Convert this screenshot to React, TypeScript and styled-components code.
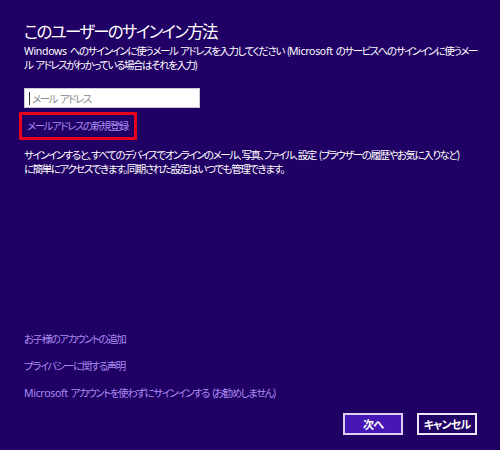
import React from "react";
import styled, { createGlobalStyle } from "styled-components";

const Global = createGlobalStyle`
  html, body { margin: 0; padding: 0; background: #200064; }
  body { font-family: "Noto Sans CJK JP", "Noto Sans", sans-serif; }
`;

const Page = styled.div`
  width: 500px;
  height: 450px;
  box-sizing: border-box;
  background: #200064;
  color: #ffffff;
  padding: 19px 23px 0 24px;
  display: flex;
  flex-direction: column;
  font-family: "Noto Sans CJK JP", "Noto Sans", sans-serif;
  font-feature-settings: "palt";
`;

const Title = styled.h1`
  margin: 0;
  font-weight: 400;
  font-size: 16.5px;
  line-height: 24px;
  letter-spacing: -1.75px;
  color: #ffffff;
`;

const textStyle = `
  font-size: 10.5px;
  letter-spacing: -1.45px;
  word-spacing: 2px;
  white-space: nowrap;
`;

const Lat = styled.span`
  font-family: "Noto Sans", sans-serif;
  font-size: 10.5px;
  letter-spacing: -0.3px;
  word-spacing: 0;
`;

const Desc = styled.p`
  margin: 1px 0 0 0;
  line-height: 14px;
  color: #ffffff;
  ${textStyle}
`;

const Input = styled.div`
  margin-top: 16px;
  width: 170px;
  height: 18px;
  background: #ffffff;
  border: 1px solid #c8c8d8;
  box-sizing: content-box;
  display: flex;
  align-items: center;
  padding-left: 4px;
  color: #8a8a8a;
  ${textStyle}
`;

const Caret = styled.span`
  display: inline-block;
  width: 1px;
  height: 13px;
  background: #333;
  margin-right: 2px;
`;

const Highlight = styled.div`
  margin-top: 4px;
  margin-left: -5px;
  align-self: flex-start;
  border: 3px solid #e8001c;
  padding: 0 0 0 5px;
  box-sizing: border-box;
  width: 118px;
  height: 28px;
  display: flex;
  align-items: center;
`;

const Link = styled.a<{ $gap?: number }>`
  display: block;
  color: #a98bf0;
  line-height: 16px;
  text-decoration: none;
  margin-top: ${(p) => p.$gap ?? 0}px;
  ${textStyle}
`;

const Body = styled.p`
  margin: 8px 0 0 0;
  line-height: 14px;
  ${textStyle}
`;

const Spacer = styled.div`
  flex: 1;
`;

const Footer = styled.div`
  display: flex;
  justify-content: flex-end;
  gap: 14px;
  margin-top: 12px;
  margin-bottom: 15px;
`;

const Button = styled.button<{ $primary?: boolean }>`
  width: 60px;
  height: 22px;
  box-sizing: border-box;
  border: 2px solid ${(p) => (p.$primary ? "#d8d0ee" : "#ece8f6")};
  background: ${(p) => (p.$primary ? "#4617b4" : "#200064")};
  color: #ffffff;
  font-family: "Noto Sans CJK JP", sans-serif;
  font-feature-settings: "palt";
  font-weight: 700;
  font-size: 11px;
  letter-spacing: -0.8px;
  padding: 0;
  display: flex;
  align-items: center;
  justify-content: center;
`;

export default function App() {
  return (
    <>
      <Global />
      <Page>
        <Title>このユーザーのサインイン方法</Title>
        <Desc>
          <Lat>Windows</Lat> へのサインインに使うメール アドレスを入力してください (<Lat>Microsoft</Lat> のサービスへのサインインに使うメー
          <br />
          ル アドレスがわかっている場合はそれを入力)
        </Desc>
        <Input>
          <Caret />
          メール アドレス
        </Input>
        <Highlight>
          <Link href="#">メールアドレスの新規登録</Link>
        </Highlight>
        <Body>
          サインインすると、すべてのデバイスでオンラインのメール、写真、ファイル、設定 (ブラウザーの履歴やお気に入りなど)
          <br />
          に簡単にアクセスできます。同期された設定はいつでも管理できます。
        </Body>
        <Spacer />
        <Link href="#">お子様のアカウントの追加</Link>
        <Link href="#" $gap={11}>プライバシーに関する声明</Link>
        <Link href="#" $gap={11}><Lat>Microsoft</Lat> アカウントを使わずにサインインする (お勧めしません)</Link>
        <Footer>
          <Button $primary>次へ</Button>
          <Button>キャンセル</Button>
        </Footer>
      </Page>
    </>
  );
}
